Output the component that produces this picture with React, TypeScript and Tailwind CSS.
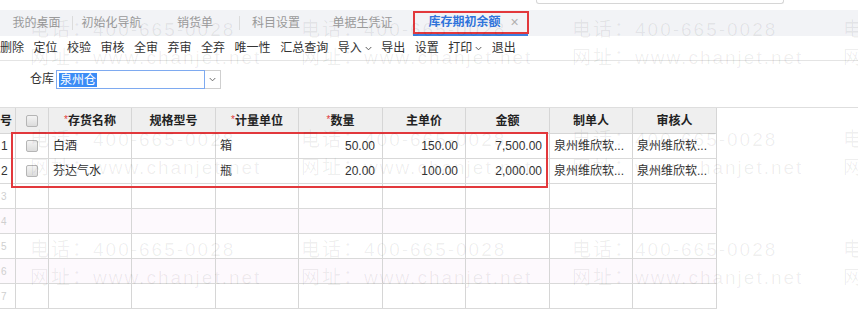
import React from "react";

const font = { fontFamily: '"Liberation Sans", "Noto Sans CJK SC", sans-serif' };

const tabs = [
  { label: "我的桌面", w: "w-[73px]", sep: true },
  { label: "初始化导航", w: "w-[77px]", sep: false },
  { label: "销货单", w: "w-[90px]", sep: true },
  { label: "科目设置", w: "w-[72px]", sep: false },
  { label: "单据生凭证", w: "w-[101px]", sep: false },
];

const tools = ["删除", "定位", "校验", "审核", "全审", "弃审", "全弃", "唯一性", "汇总查询", "导入", "导出", "设置", "打印", "退出"];
const dropTools = ["导入", "打印"];

const cols = [
  { w: "w-[16px]", title: "号", req: false, align: "text-right pr-[3px]" },
  { w: "w-[33px]", title: "", req: false, align: "" },
  { w: "w-[83px]", title: "存货名称", req: true, align: "text-left pl-[4px]" },
  { w: "w-[84px]", title: "规格型号", req: false, align: "text-left pl-[4px]" },
  { w: "w-[83px]", title: "计量单位", req: true, align: "text-left pl-[4px]" },
  { w: "w-[84px]", title: "数量", req: true, align: "text-right pr-[7px]" },
  { w: "w-[83px]", title: "主单价", req: false, align: "text-right pr-[7px]" },
  { w: "w-[84px]", title: "金额", req: false, align: "text-right pr-[7px]" },
  { w: "w-[83px]", title: "制单人", req: false, align: "text-left pl-[4px]" },
  { w: "w-[84px]", title: "审核人", req: false, align: "text-left pl-[4px]" },
];

const rows = [
  ["白酒", "", "箱", "50.00", "150.00", "7,500.00", "泉州维欣软...", "泉州维欣软..."],
  ["芬达气水", "", "瓶", "20.00", "100.00", "2,000.00", "泉州维欣软...", "泉州维欣软..."],
  [], [], [], [], [],
];

function Chevron({ className }: { className?: string }) {
  return (
    <svg viewBox="0 0 8 5" className={className} fill="none" stroke="currentColor" strokeWidth="1.1">
      <path d="M0.8 0.8 L4 4 L7.2 0.8" />
    </svg>
  );
}

function Box() {
  return (
    <span className="block w-[12px] h-[12px] rounded-[2px] border border-[#b5b5b5] bg-gradient-to-b from-[#f4f4f4] to-[#dcdcdc]" />
  );
}

export default function App() {
  return (
    <div className="relative w-[858px] h-[309px] overflow-hidden bg-white text-[12px] text-[#333]" style={font}>
      {/* top strip */}
      <div className="h-[10px] flex">
        <div className="ml-[536px] w-[248px] h-[4px] border border-t-0 border-[#d6d6d6] rounded-b-[3px]" />
      </div>

      {/* tabs */}
      <div className="h-[26px] bg-[#f2f3f6] flex items-stretch">
        {tabs.map((t) => (
          <div key={t.label} className={`${t.w} relative flex items-center justify-center text-[#9a9a9a]`}>
            {t.label}
            {t.sep && <span className="absolute right-0 top-[6px] h-[14px] w-px bg-[#dcdcdc]" />}
          </div>
        ))}
        <div className="w-[115px] flex items-center justify-center gap-[10px] border-b-2 border-[#3d7fe0] text-[#2f74dc] font-bold">
          <span className="pl-[6px]">库存期初余额</span>
          <span className="text-[#b0b0b0] font-normal text-[14px] leading-none">×</span>
        </div>
      </div>

      {/* toolbar */}
      <div className="h-[25px] flex items-center gap-[9.5px] border-b border-[#e4e4e4]">
        {tools.map((t) => (
          <span key={t} className="flex items-center gap-[3px] whitespace-nowrap">
            {t}
            {dropTools.includes(t) && <Chevron className="w-[7px] h-[5px] text-[#555]" />}
          </span>
        ))}
      </div>

      {/* filter */}
      <div className="h-[47px] flex items-start pt-[9px] border-b border-[#dedede]">
        <span className="ml-[30px] mr-[2px] leading-[19px]">仓库</span>
        <div className="flex h-[19px]">
          <div className="w-[149px] border border-[#7eaaf0] flex items-center pl-[2px]">
            <span className="bg-[#3b8cf6] text-white leading-[14px] px-px">泉州仓</span>
          </div>
          <div className="w-[16px] border border-l-0 border-[#cfcfcf] flex items-center justify-center">
            <Chevron className="w-[7px] h-[5px] text-[#666]" />
          </div>
        </div>
      </div>

      {/* grid */}
      <div className="w-[717px]">
        <div className="flex h-[26px] bg-[#efefef] border-b border-[#d6d6d6]">
          {cols.map((c, i) => (
            <div
              key={i}
              className={`${c.w} shrink-0 border-r border-[#d6d6d6] flex items-center font-bold text-[#222] ${
                i === 0 ? "justify-end pr-[3px]" : "justify-center"
              }`}
            >
              {i === 1 ? <Box /> : (
                <span>
                  {c.req && <span className="text-[#e23a3a] font-normal text-[10px] align-top">*</span>}
                  {c.title}
                </span>
              )}
            </div>
          ))}
        </div>
        {rows.map((r, ri) => (
          <div key={ri} className={`flex h-[25px] border-b border-[#d9d9d9] ${ri === 3 || ri === 5 ? "bg-[#fdf9fd]" : "bg-white"}`}>
            <div className={`w-[16px] shrink-0 border-r border-[#d6d6d6] flex items-center pl-[1px] ${ri < 2 ? "text-[#333]" : "text-[#cfcfcf] text-[10px]"}`}>
              {ri + 1}
            </div>
            <div className="w-[33px] shrink-0 border-r border-[#d6d6d6] flex items-center justify-center">
              {ri < 2 && <Box />}
            </div>
            {cols.slice(2).map((c, ci) => (
              <div key={ci} className={`${c.w} shrink-0 border-r border-[#d6d6d6] leading-[24px] whitespace-nowrap overflow-hidden ${c.align}`}>
                {r[ci] ?? ""}
              </div>
            ))}
          </div>
        ))}
      </div>

      {/* annotation boxes */}
      <div className="absolute left-[413px] top-[11px] w-[116px] h-[23px] border-2 border-[#e2383c] pointer-events-none" />
      <div className="absolute left-[11px] top-[132px] w-[537px] h-[56px] border-2 border-[#e2383c] pointer-events-none" />

      {/* watermark */}
      <div className="absolute inset-0 pointer-events-none">
        {[20, 130, 240].map((y) =>
          [30, 301, 572, 843].map((x) => (
            <div
              key={`${x}-${y}`}
              className="absolute text-[19px] tracking-[2px] leading-[28px] text-black/[0.065] whitespace-nowrap"
              style={{ left: x, top: y - 4 }}
            >
              <div>电话：400-665-0028</div>
              <div>网址：www.chanjet.net</div>
            </div>
          ))
        )}
      </div>
    </div>
  );
}
